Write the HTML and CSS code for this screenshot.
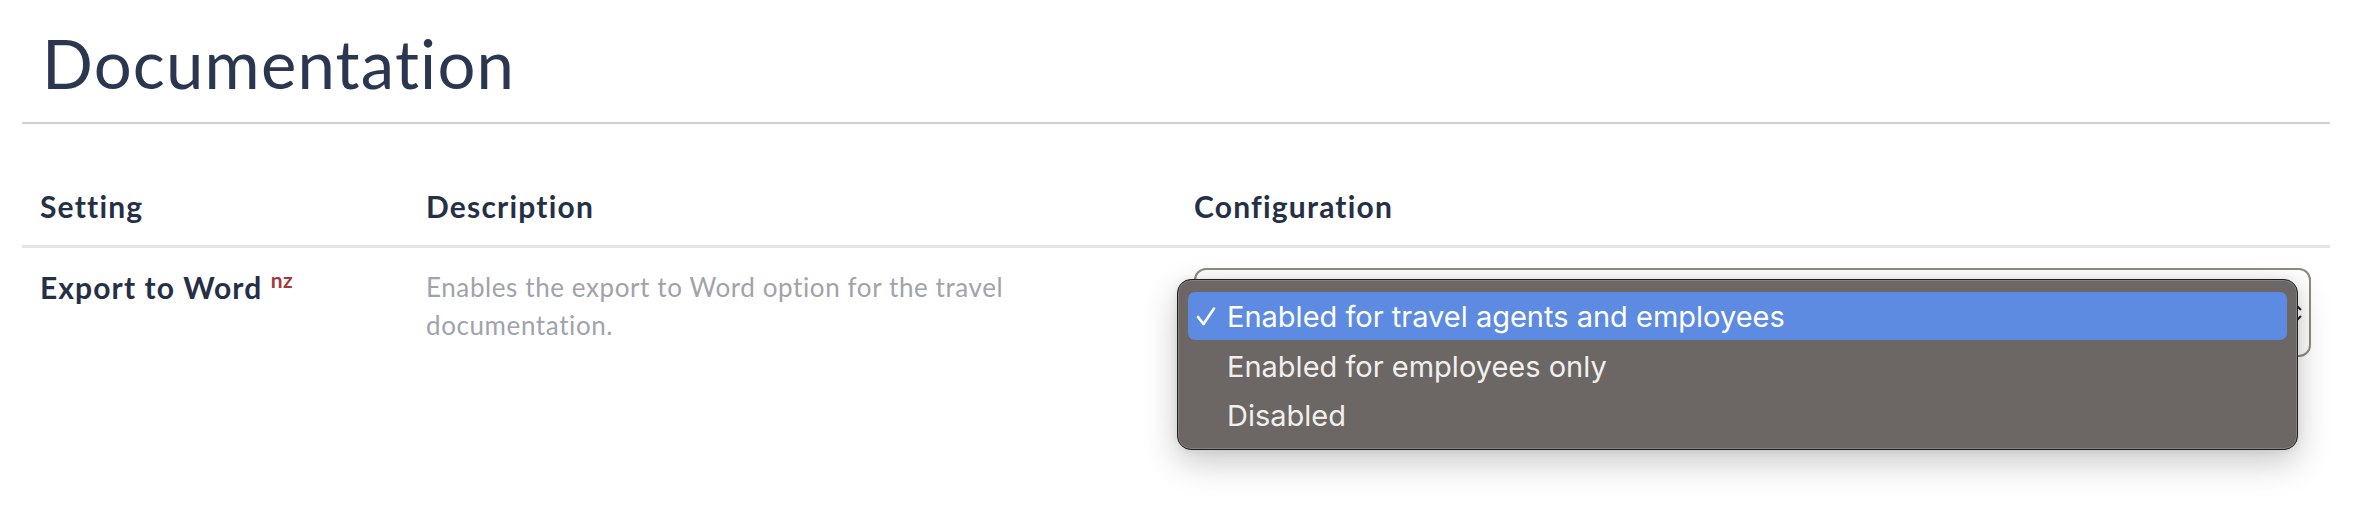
FILE: index.html
```html
<!DOCTYPE html>
<html lang="en">
<head>
<meta charset="utf-8">
<title>Documentation</title>
<link rel="stylesheet" href="styles.css">
</head>
<body>
<div class="page">
  <h1 class="title">Documentation</h1>
  <table class="settings">
    <colgroup>
      <col class="col-setting">
      <col class="col-desc">
      <col class="col-config">
    </colgroup>
    <thead>
      <tr>
        <th>Setting</th>
        <th>Description</th>
        <th>Configuration</th>
      </tr>
    </thead>
    <tbody>
      <tr>
        <td class="name">Export to Word <span class="region">nz</span></td>
        <td class="desc"><p>Enables the export to Word option for the travel documentation.</p></td>
        <td class="config">
          <div class="select-wrap">
            <div class="select">
              <svg class="chev" width="12" height="20" viewBox="0 0 12 20"><path d="M2 7 L6 3 L10 7 M2 13 L6 17 L10 13" fill="none" stroke="#1f2433" stroke-width="2"/></svg>
            </div>
            <ul class="menu">
              <li class="item selected">
                <svg class="check" width="20" height="20" viewBox="0 0 20 20"><path d="M2 10 L7.5 17 L18 1.5" fill="none" stroke="#ffffff" stroke-width="2.6" stroke-linecap="round" stroke-linejoin="round"/></svg>
                <span>Enabled for travel agents and employees</span>
              </li>
              <li class="item"><span>Enabled for employees only</span></li>
              <li class="item"><span>Disabled</span></li>
            </ul>
          </div>
        </td>
      </tr>
    </tbody>
  </table>
</div>
</body>
</html>
```
FILE: styles.css
```css
* { box-sizing: border-box; }
html, body { margin: 0; padding: 0; background: #ffffff; }
body { font-family: Lato, "Open Sans", sans-serif; color: #27324a; min-height: 516px; }

.page { padding: 0 30px 0 22px; min-height: 516px; }

.title {
  margin: 0;
  padding: 23px 0 19px 20px;
  font-size: 67px;
  line-height: 80px;
  font-weight: 400;
  letter-spacing: 1.2px;
  color: #2b3750;
  border-bottom: 2px solid #d0d0d0;
}

.settings {
  width: 100%;
  border-collapse: collapse;
  table-layout: fixed;
}
.col-setting { width: 386px; }
.col-desc { width: 768px; }

.settings th {
  text-align: left;
  font-size: 30px;
  line-height: 38px;
  font-weight: 700;
  letter-spacing: 1.2px;
  color: #253047;
  padding: 63px 18px 20px 18px;
  border-bottom: 3px solid #e4e4e4;
}

.settings td {
  vertical-align: top;
  padding: 20px 19px 20px 18px;
}

.name {
  font-size: 30px;
  line-height: 38px;
  font-weight: 700;
  letter-spacing: 1.1px;
  color: #253047;
}
.region {
  display: inline-block;
  vertical-align: top;
  margin-top: 1px;
  font-size: 21px;
  line-height: 21px;
  font-weight: 700;
  letter-spacing: 0.3px;
  color: #a23a3a;
}

.desc p {
  margin: 0;
  max-width: 660px;
  font-size: 26px;
  line-height: 38px;
  font-weight: 400;
  letter-spacing: 0.6px;
  color: #9fa3ab;
}

.select-wrap { position: relative; }
.select {
  height: 89px;
  border: 2px solid #8d8b7d;
  border-radius: 12px;
  background: #fefefe;
  display: flex;
  align-items: center;
  justify-content: flex-end;
  padding-right: 6px;
}
.chev { display: block; }

.menu {
  position: absolute;
  z-index: 5;
  left: -17px;
  top: 11px;
  width: 1121px;
  height: 171px;
  margin: 0;
  padding: 12px 10px 10px 10px;
  list-style: none;
  background: #6c6764;
  border: 1.5px solid #1e1e1e;
  border-radius: 14px;
  box-shadow: inset 0 0 0 1px rgba(255, 255, 255, 0.18), 0 12px 34px rgba(0, 0, 0, 0.22), 0 0 8px rgba(0, 0, 0, 0.08);
  font-family: Inter, "Noto Sans", sans-serif;
}
.item {
  position: relative;
  height: 49.5px;
  display: flex;
  align-items: center;
  padding-left: 39px;
  font-size: 29px;
  color: #f1f0ef;
  border-radius: 7px;
}
.item.selected {
  height: 48px;
  margin-bottom: 1.5px;
  background: #5d8be1;
  color: #ffffff;
}
.check {
  position: absolute;
  left: 8px;
  top: 15px;
}
```
